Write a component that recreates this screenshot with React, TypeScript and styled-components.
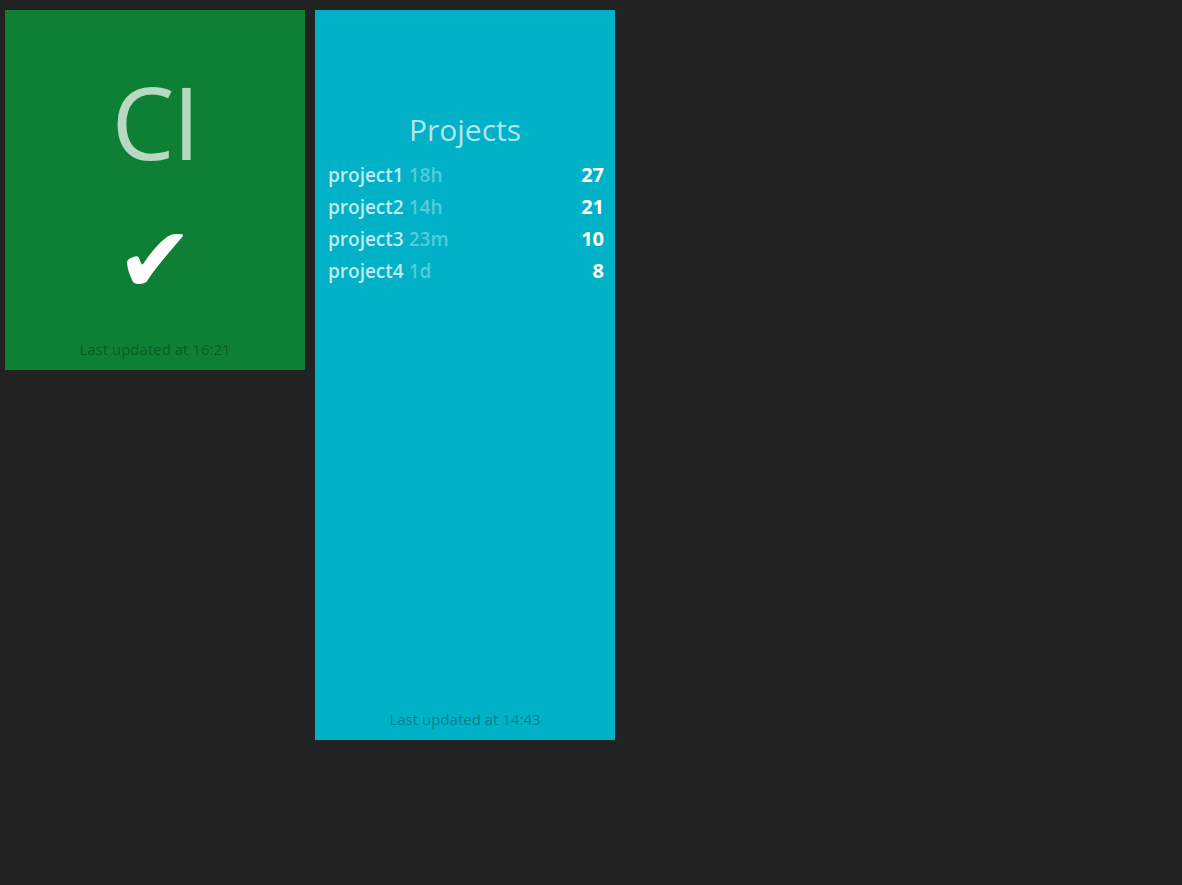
import React from "react";
import styled, { createGlobalStyle } from "styled-components";

const Global = createGlobalStyle`
  html, body { margin: 0; padding: 0; background: #222222; }
  body { font-family: "Open Sans", "Liberation Sans", sans-serif; }
`;

const Board = styled.div`
  display: flex;
  align-items: flex-start;
  gap: 10px;
  padding: 10px 5px;
  min-height: 885px;
  box-sizing: border-box;
  background: #222222;
`;

const Tile = styled.div<{ $bg: string; $h: number }>`
  width: 300px;
  height: ${(p) => p.$h}px;
  background: ${(p) => p.$bg};
  box-sizing: border-box;
  display: flex;
  flex-direction: column;
  align-items: center;
  color: #fff;
`;

const BigTitle = styled.div`
  margin-top: 61px;
  font-size: 100px;
  line-height: 100px;
  font-weight: 400;
  letter-spacing: -2px;
  color: rgba(255, 255, 255, 0.7);
`;

const Check = styled.div`
  margin-top: 44px;
  font-family: "DejaVu Sans", sans-serif;
  font-size: 92px;
  line-height: 92px;
  color: #ffffff;
`;

const Updated = styled.div`
  margin-top: auto;
  margin-bottom: 11px;
  font-size: 15px;
  line-height: 20px;
  color: rgba(0, 0, 0, 0.3);
`;

const ListTitle = styled.div`
  margin-top: 102px;
  font-size: 30px;
  line-height: 35px;
  font-weight: 500;
  color: rgba(255, 255, 255, 0.7);
`;

const List = styled.ul`
  list-style: none;
  margin: 12px 0 0;
  padding: 0 11px 0 13px;
  width: 100%;
  box-sizing: border-box;
`;

const Row = styled.li`
  display: flex;
  justify-content: space-between;
  align-items: baseline;
  height: 32px;
  line-height: 32px;
  font-size: 19px;
  font-weight: 600;
`;

const Label = styled.span`
  color: rgba(255, 255, 255, 0.75);
`;

const Age = styled.span`
  color: rgba(255, 255, 255, 0.35);
  margin-left: 5px;
`;

const Value = styled.span`
  color: #ffffff;
  font-size: 20px;
  font-weight: 700;
`;

const projects = [
  { name: "project1", age: "18h", value: 27 },
  { name: "project2", age: "14h", value: 21 },
  { name: "project3", age: "23m", value: 10 },
  { name: "project4", age: "1d", value: 8 },
];

export default function App() {
  return (
    <>
      <Global />
      <Board>
        <Tile $bg="#0e8035" $h={360}>
          <BigTitle>CI</BigTitle>
          <Check>✔</Check>
          <Updated>Last updated at 16:21</Updated>
        </Tile>
        <Tile $bg="#00b1c7" $h={730}>
          <ListTitle>Projects</ListTitle>
          <List>
            {projects.map((p) => (
              <Row key={p.name}>
                <span>
                  <Label>{p.name}</Label>
                  <Age>{p.age}</Age>
                </span>
                <Value>{p.value}</Value>
              </Row>
            ))}
          </List>
          <Updated>Last updated at 14:43</Updated>
        </Tile>
      </Board>
    </>
  );
}
